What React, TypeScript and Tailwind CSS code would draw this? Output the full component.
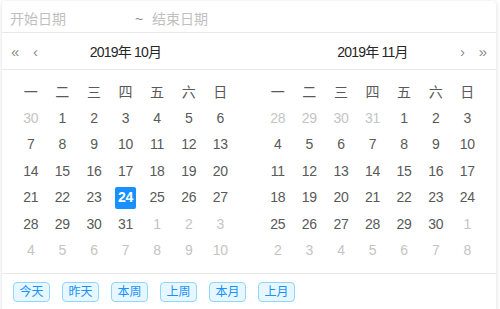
import React from "react";

const weekNames = ["一", "二", "三", "四", "五", "六", "日"];

type Cell = { d: number; muted: boolean; selected?: boolean };

const oct: Cell[] = [
  { d: 30, muted: true },
  ...Array.from({ length: 31 }, (_, i) => ({ d: i + 1, muted: false, selected: i + 1 === 24 })),
  ...Array.from({ length: 10 }, (_, i) => ({ d: i + 1, muted: true })),
];

const nov: Cell[] = [
  ...[28, 29, 30, 31].map((d) => ({ d, muted: true })),
  ...Array.from({ length: 30 }, (_, i) => ({ d: i + 1, muted: false })),
  ...Array.from({ length: 8 }, (_, i) => ({ d: i + 1, muted: true })),
];

function Grid({ cells }: { cells: Cell[] }) {
  return (
    <div className="px-[13px] pt-[9px] pb-[9px]">
      <div className="grid grid-cols-7 h-[26px] items-center text-[14px] text-[#595959]">
        {weekNames.map((w) => (
          <div key={w} className="text-center">{w}</div>
        ))}
      </div>
      <div className="grid grid-cols-7 auto-rows-[26.5px] items-center text-[14px] tracking-[-0.3px]">
        {cells.map((c, i) => (
          <div key={i} className="flex justify-center">
            {c.selected ? (
              <span className="w-[21px] h-[22px] flex items-center justify-center rounded-[2px] bg-[#1890ff] text-white font-bold">
                {c.d}
              </span>
            ) : (
              <span className={c.muted ? "text-[#c4c4c4]" : "text-[#595959]"}>{c.d}</span>
            )}
          </div>
        ))}
      </div>
    </div>
  );
}

export default function App() {
  const font = { fontFamily: '"Liberation Sans", "Noto Sans CJK SC", sans-serif' };
  return (
    <div className="w-[500px] h-[309px] bg-white overflow-hidden" style={font}>
      <div className="ml-[2px] mt-[1px] w-[494px] bg-white rounded-[4px] shadow-[0_1px_5px_rgba(0,0,0,0.15)]">
        <div className="h-[32px] flex items-center pt-[5px] border-b border-[#e8e8e8] text-[14px] text-[#bfbfbf]">
          <span className="ml-[8px] w-[122px]">开始日期</span>
          <span className="w-[14px] text-center text-[#8c8c8c]">~</span>
          <span className="ml-[6px]">结束日期</span>
        </div>
        <div className="flex">
          <div className="flex-1">
            <div className="h-[37px] flex items-center pt-[3px] border-b border-[#e8e8e8] relative">
              <span className="absolute left-[9px] text-[15px] text-[#8c8c8c]">«</span>
              <span className="absolute left-[31px] text-[15px] text-[#8c8c8c]">‹</span>
              <div className="w-full text-center text-[14px] text-[#262626] tracking-[-0.8px]">2019年 10月</div>
            </div>
            <Grid cells={oct} />
          </div>
          <div className="flex-1">
            <div className="h-[37px] flex items-center pt-[3px] border-b border-[#e8e8e8] relative">
              <div className="w-full text-center text-[14px] text-[#262626] tracking-[-0.8px]">2019年 11月</div>
              <span className="absolute right-[31px] text-[15px] text-[#8c8c8c]">›</span>
              <span className="absolute right-[9px] text-[15px] text-[#8c8c8c]">»</span>
            </div>
            <Grid cells={nov} />
          </div>
        </div>
        <div className="border-t border-[#e8e8e8] h-[40px] flex items-start pt-[8px] pl-[11px] gap-[12px]">
          {["今天", "昨天", "本周", "上周", "本月", "上月"].map((t) => (
            <button
              key={t}
              className="w-[37px] h-[20px] flex items-center justify-center rounded-[4px] border border-[#91d5ff] bg-[#e6f7ff] text-[#1890ff] text-[12px]"
            >
              {t}
            </button>
          ))}
        </div>
      </div>
    </div>
  );
}
